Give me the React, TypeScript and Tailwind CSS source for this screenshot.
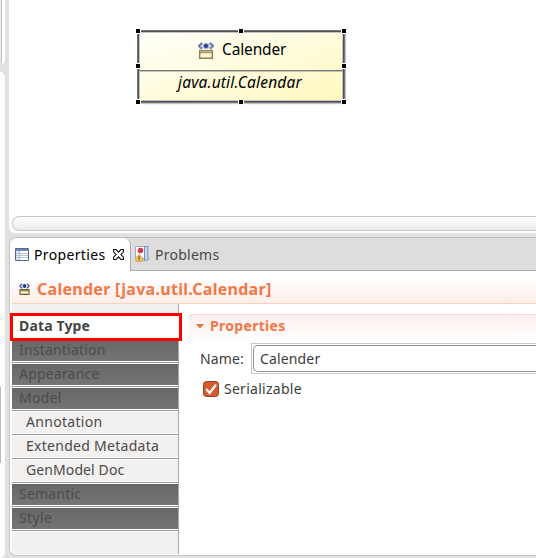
import React from 'react';

function DataTypeIcon({ className }: { className: string }) {
  return (
    <svg className={className} viewBox="0 0 16 17" fill="none">
      <path d="M4 1 1 4l3 3M12 1l3 3-3 3" stroke="#a9b4d6" strokeWidth="2.6" />
      <path d="M4 1 1 4l3 3M12 1l3 3-3 3" stroke="#4b5c9c" strokeWidth="1.4" strokeDasharray="1.6 .5" />
      <ellipse cx="8" cy="4" rx="3.6" ry="3" fill="#a4b1d7" />
      <circle cx="8" cy="4" r="2" fill="#263d85" />
      <path d="M1.7 8.7h12.6v7.5H1.7z" fill="#fbf7d0" stroke="#91804f" strokeWidth="1.4" />
      <path d="M2 10.6h12" stroke="#a59668" strokeWidth="1.2" />
    </svg>
  );
}

function SmallDataTypeIcon() {
  return (
    <svg className="h-[12px] w-[11px]" viewBox="0 0 11 12" fill="none">
      <path d="M3 .7.8 3 3 5.3M8 .7 10.2 3 8 5.3" stroke="#46568f" strokeWidth="1.3" />
      <circle cx="5.5" cy="3" r="1.9" fill="#263d85" />
      <path d="M1 6.6h9v4.8H1z" fill="#faf3bd" stroke="#6d5c31" strokeWidth="1.1" />
      <path d="M1 7.8h9" stroke="#80704a" />
    </svg>
  );
}

function TableIcon() {
  return (
    <svg className="h-[13px] w-[14px] shrink-0" viewBox="0 0 14 13">
      <path d="M.5.5h13v12H.5z" fill="#fff" stroke="#526a91" />
      <path d="M1 1h12v2H1z" fill="#7088b0" />
      <path d="M1 3h4v9H1z" fill="#dce7f5" />
      <path d="M1 5.5h12M1 7.5h12M1 9.5h12M4.5 3v9" stroke="#b2bfd3" />
    </svg>
  );
}

function CloseIcon() {
  return (
    <svg className="h-[11px] w-[11px] shrink-0" viewBox="0 0 10 10">
      <path d="M.5.5h2.3L5 2.8 7.2.5h2.3v2L7.2 5l2.3 2.5v2H7.2L5 7.2 2.8 9.5H.5v-2L2.8 5 .5 2.5z" fill="#fff" stroke="#111" strokeWidth="1" />
    </svg>
  );
}

function ProblemsIcon() {
  return (
    <svg className="h-[16px] w-[15px] shrink-0" viewBox="0 0 15 16">
      <path d="M.5.5h9v12h-9z" fill="#f8fbff" stroke="#9caabd" />
      <path d="M9.5.5h3.7c-.9.6-.9 1.6-.4 2.5V11l1 2.5-4.3 1z" fill="#c8daf0" stroke="#7590b8" />
      <circle cx="5.5" cy="4.5" r="2.7" fill="#d9333f" />
      <path d="M4.2 8.6c1.4 0 4.2 5.6 3.6 6.3-.5.6-6.7.6-7.2 0-.6-.7 2.2-6.3 3.6-6.3z" fill="#f6c65e" stroke="#cb943b" strokeWidth=".8" />
      <path d="M4.1 10.3v2.4M4.1 13.3v1" stroke="#503812" strokeWidth="1.1" />
    </svg>
  );
}

const handles = [
  'left-[-2px] top-[-2px]', 'left-[101px] top-[-2px]', 'left-[204px] top-[-2px]',
  'left-[-2px] top-[33px]', 'left-[204px] top-[33px]',
  'left-[-2px] top-[69px]', 'left-[101px] top-[69px]', 'left-[204px] top-[69px]',
];

function DataTypeNode() {
  return (
    <div className="absolute left-[137px] top-[30px] h-[73px] w-[208px] text-black">
      <div className="flex h-full flex-col border border-[#77777b] bg-linear-to-br from-[#fffffb] to-[#fff8bd] shadow-[inset_0_0_0_1px_#505054,inset_0_0_0_2px_#c4c4c4,1px_1px_1px_#c4c4c4]">
        <div className="mx-px flex h-[40px] items-center border-b border-[#77767c] pl-[59px]">
          <DataTypeIcon className="h-[17px] w-[16px]" />
          <span className="-mt-[3px] ml-[8px] text-[15.5px] leading-[20px] tracking-[-0.15px]">Calender</span>
        </div>
        <div className="mx-px h-px shrink-0 bg-[#c5c3b4]" />
        <span className="-mt-[2px] pl-[40px] text-[15.5px] italic leading-[24px] tracking-[0.17px]">java.util.Calendar</span>
      </div>
      {handles.map((place) => (
        <i key={place} className={`absolute box-content size-[4px] border border-white bg-black ${place}`} />
      ))}
    </div>
  );
}

const sections = [
  { name: 'Instantiation', dark: true, text: 'tracking-[0.2px]' },
  { name: 'Appearance', dark: true, text: 'tracking-[0.2px]' },
  { name: 'Model', dark: true, text: 'tracking-[0.3px]' },
  { name: 'Annotation', dark: false, text: 'tracking-[0.3px]' },
  { name: 'Extended Metadata', dark: false, text: 'tracking-[0.28px]' },
  { name: 'GenModel Doc', dark: false, text: 'tracking-[0.1px]' },
  { name: 'Semantic', dark: true, text: 'tracking-[0.2px]' },
  { name: 'Style', dark: true, text: 'tracking-[0.4px]' },
];

function Sidebar() {
  return (
    <nav className="flex h-[250px] w-[167px] shrink-0 flex-col border-r border-[#aaa7a4] bg-[#f2f1f0]">
      <div className="relative z-10 -ml-[2px] mt-[9px] flex h-[28px] w-[172px] shrink-0 items-center border-[3px] border-[#f00] bg-white pb-[2px] pl-[6px] font-bold text-[#444]">
        <span className="tracking-[0.15px]">Data Type</span>
      </div>
      <div className="-mt-px">
        {sections.map(({ name, dark, text }) => (
          <div key={name} className="flex h-[24px] flex-col">
            <div className={`flex h-[21px] items-center pb-[2px] ${dark ? 'bg-linear-to-b from-[#686765] to-[#777573] pl-[7px] text-[#4b4b4b]' : 'bg-[#f2f1f0] pl-[14px] text-[#4a4a4a]'}`}>
              <span className={text}>{name}</span>
            </div>
            <div className="h-[3px] border-y border-white bg-[#9b9996]" />
          </div>
        ))}
      </div>
    </nav>
  );
}

function PropertiesForm() {
  return (
    <section className="ml-[10px] mt-[10px] flex-1 text-[#3c3c3c]">
      <div className="flex h-[28px] items-start rounded-tl-[5px] border-t border-[#f9d8d2] bg-linear-to-b from-[#fdeeed] to-white pl-[7px] pt-px">
        <svg className="mt-[8px] h-[5px] w-[8px]" viewBox="0 0 8 5"><path d="M0 0h8L4 4.5z" fill="#e96f40" /></svg>
        <span className="ml-[6px] font-bold leading-[20px] tracking-[0.3px] text-[#f07746]">Properties</span>
      </div>
      <div className="flex h-[32px] items-center pl-[11px]">
        <label className="w-[51px] pt-[2px] tracking-[0.1px]">Name:</label>
        <div className="h-[31px] flex-1 border border-r-0 border-[#cac8c6] p-px pr-0">
          <div className="flex h-[27px] items-center rounded-l-[5px] border border-r-0 border-[#969492] bg-white pl-[6px] pt-[2px] tracking-[0.15px]">Calender</div>
        </div>
      </div>
      <label className="mt-[4px] flex h-[22px] items-center pl-[14px]">
        <svg className="size-[16px]" viewBox="0 0 16 16">
          <rect x=".5" y=".5" width="15" height="15" rx="3" fill="#d75a2c" stroke="#8c4328" />
          <path d="m3.2 8 3.4 4L13 3.8" fill="none" stroke="#fff" strokeWidth="2.3" />
        </svg>
        <span className="ml-[5px] tracking-[0.27px]">Serializable</span>
      </label>
    </section>
  );
}

export default function App() {
  return (
    <div className="flex h-[558px] w-[536px] overflow-hidden bg-[#e1e1e1] font-['Noto_Sans','Open_Sans',sans-serif] text-[14px] leading-[20px]">
      <aside className="flex w-[5px] shrink-0 flex-col gap-[7px]">
        <div className="h-[65px] rounded-br-[5px] border-r-[3px] border-white bg-[#eee] shadow-[inset_-1px_0_#c4c4c4]">
          <div className="ml-px h-[60px] w-px bg-[#bdbdbd]" />
        </div>
        <div className="flex flex-1 flex-col rounded-r-[5px] bg-[#fdfdfd] pt-[315px]">
          <div className="h-[76px] w-px bg-[#bcbac0]" />
        </div>
      </aside>
      <main className="ml-[4px] flex min-w-0 flex-1 flex-col">
        <section className="relative flex h-[233px] shrink-0 flex-col justify-end rounded-bl-[6px] bg-white pb-[2px] pl-[3px]">
          <div className="h-[15px] rounded-l-[7px] border border-r-0 border-[#c9c7c5] bg-linear-to-b from-white to-[#edeceb]" />
          <div className="absolute -left-[9px] top-0"><DataTypeNode /></div>
        </section>
        <section className="mt-[4px] flex h-[319px] flex-col rounded-l-[7px] border-b border-l border-[#c4c4c4] bg-white">
          <div className="flex h-[34px] rounded-tl-[7px] border-t border-[#bdbdbd] bg-[#ddd]">
            <div className="flex w-[121px] shrink-0 items-center rounded-t-[7px] border-r border-[#aaa] bg-white pl-[5px] text-black">
              <TableIcon />
              <span className="ml-[5px] w-[79px] tracking-[0.35px]">Properties</span>
              <CloseIcon />
            </div>
            <div className="flex flex-1 items-center border-b border-[#aaa] pl-[4px] text-[#484848]">
              <ProblemsIcon /><span className="ml-[5px] pt-px tracking-[0.25px]">Problems</span>
            </div>
          </div>
          <div className="ml-[2px] flex h-[33px] shrink-0 items-center border-b border-[#fbcfc0] bg-linear-to-b from-white from-20% to-[#fdece8] pl-[7px] pt-[3px] font-bold text-[#f17847]">
            <SmallDataTypeIcon />
            <span className="ml-[7px] text-[16px] tracking-[0.28px]">Calender [java.util.Calendar]</span>
          </div>
          <div className="ml-[2px] flex">
            <Sidebar />
            <PropertiesForm />
          </div>
        </section>
      </main>
    </div>
  );
}
